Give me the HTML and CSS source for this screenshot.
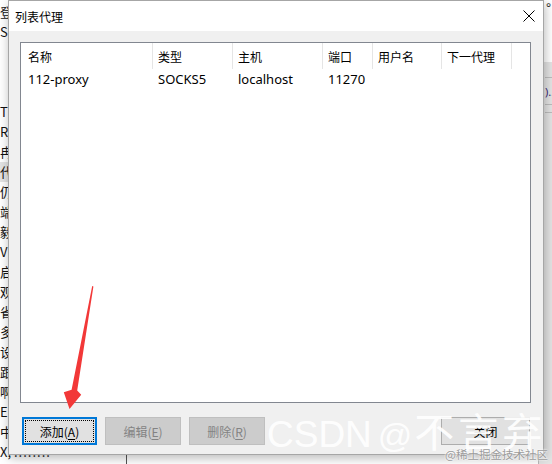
FILE: index.html
```html
<!DOCTYPE html>
<html lang="zh-CN">
<head>
<meta charset="utf-8">
<title>列表代理</title>
<link rel="stylesheet" href="styles.css">
</head>
<body>
<div class="desktop">
  <div class="bgwin">
    <div class="bgtext">
      <div>登</div><div>S</div><div>&nbsp;</div><div>&nbsp;</div><div>&nbsp;</div>
      <div>T</div><div>R</div><div>冉</div><div class="hl">代</div><div>仍</div>
      <div>端</div><div>毅</div><div>V</div><div>启</div><div>观</div>
      <div>省</div><div>多</div><div>设</div><div>跟</div><div>啊</div>
      <div>E</div><div>中</div><div>X, <span class="dots">........</span></div>
    </div>
    <div class="bgline"></div>
  </div>

  <div class="rightwin">
    <div class="rw-top">°</div>
    <div class="rw-gray">
      <div class="rw-cell"></div>
      <div class="rw-cell rw-text">)...</div>
      <div class="rw-cell small"></div>
    </div>
  </div>

  <div class="dialog">
    <div class="titlebar">
      <span class="title">列表代理</span>
      <span class="close">
        <svg width="12" height="12" viewBox="0 0 12 12"><path d="M0.5 0.5 L11.5 11.5 M11.5 0.5 L0.5 11.5" stroke="#000" stroke-width="1" fill="none"/></svg>
      </span>
    </div>
    <div class="body">
      <div class="list">
        <div class="head">
          <div class="c w1 first">名称</div>
          <div class="c w2">类型</div>
          <div class="c w3">主机</div>
          <div class="c w4">端口</div>
          <div class="c w5">用户名</div>
          <div class="c w6">下一代理</div>
        </div>
        <div class="row">
          <div class="d w1 first">112-proxy</div>
          <div class="d w2">SOCKS5</div>
          <div class="d w3">localhost</div>
          <div class="d w4">11270</div>
          <div class="d w5"></div>
          <div class="d w6"></div>
        </div>
      </div>
      <div class="buttons">
        <button class="btn default"><span class="focus">添加(<u>A</u>)</span></button>
        <button class="btn dis" disabled>编辑(<u>E</u>)</button>
        <button class="btn dis" disabled>删除(<u>R</u>)</button>
        <span class="spacer"></span>
        <button class="btn closebtn">关闭</button>
      </div>
    </div>
  </div>

  <svg class="arrow" width="552" height="464" viewBox="0 0 552 464">
    <polygon points="92.2,286 93.4,286.6 77.2,390.5 81.2,394.8 69.5,409 63.8,392.2 71.6,389.8" fill="#f23838"/>
  </svg>

  <div class="wm"><span class="wm-l">CSDN</span><span class="wm-at">@</span><span class="wm-c">不言弃</span></div>
  <div class="wm2">@稀土掘金技术社区</div>
</div>
</body>
</html>
```

FILE: styles.css
```css
* { box-sizing: border-box; }
html, body { margin: 0; padding: 0; }
body {
  width: 552px;
  height: 464px;
  overflow: hidden;
  background: #ffffff;
  font-family: "Noto Sans", "Noto Sans CJK SC", sans-serif;
  color: #000;
}
.desktop {
  position: relative;
  width: 552px;
  height: 464px;
  overflow: hidden;
  background: #ffffff;
}

/* window behind (left) */
.bgwin {
  position: absolute;
  left: 0;
  top: 0;
  width: 140px;
  height: 464px;
  background: #ffffff;
}
.bgtext {
  padding-top: 2px;
  padding-left: 0;
  font-family: "Noto Sans CJK SC", sans-serif;
  font-size: 13px;
  line-height: 20px;
  color: #111;
}
.bgtext .hl { background: #e3e3e3; width: 10px; }
.bgtext .dots { letter-spacing: 1px; }
.bgline {
  position: absolute;
  left: 126px;
  top: 440px;
  width: 1px;
  height: 24px;
  background: #555;
}

/* window behind (right) */
.rightwin {
  position: absolute;
  left: 538px;
  top: 0;
  width: 14px;
  height: 464px;
  background: #ffffff;
  display: flex;
  flex-direction: column;
}
.rw-top {
  height: 62px;
  padding-left: 8px;
  font-size: 12px;
  line-height: 16px;
  color: #333;
}
.rw-gray {
  flex: 1;
  background: #e4e4e4;
  border-left: 1px solid #b9b9b9;
  padding-left: 6px;
}
.rw-cell { height: 16px; border-bottom: 1px solid #bdbdbd; }
.rw-text {
  height: 27px;
  font-size: 11px;
  line-height: 27px;
  color: #3a2a7a;
  white-space: nowrap;
  overflow: hidden;
}
.rw-cell.small { height: 8px; }

/* dialog */
.dialog {
  position: absolute;
  left: 8px;
  top: 0;
  width: 536px;
  height: 455px;
  background: #f0f0f0;
  border: 1px solid #a6a6a6;
  box-shadow: 1px 3px 10px rgba(0, 0, 0, 0.28);
  display: flex;
  flex-direction: column;
}
.titlebar {
  height: 30px;
  flex: none;
  background: #ffffff;
  display: flex;
  align-items: center;
  justify-content: space-between;
  padding-left: 6px;
  font-family: "Noto Sans CJK SC", sans-serif;
  font-size: 12px;
}
.close {
  width: 28px;
  height: 30px;
  display: flex;
  align-items: center;
  justify-content: center;
}
.body {
  flex: 1;
  padding: 11px 11px 0 11px;
  display: flex;
  flex-direction: column;
}
.list {
  width: 511px;
  height: 361px;
  flex: none;
  background: #ffffff;
  border: 1px solid #828790;
}
.head {
  display: flex;
  height: 26px;
}
.c {
  display: flex;
  align-items: center;
  padding-left: 5px;
  border-right: 1px solid #e5e5e5;
  font-family: "Noto Sans CJK SC", sans-serif;
  font-size: 12px;
  white-space: nowrap;
}
.row {
  display: flex;
  height: 19px;
}
.d {
  display: flex;
  align-items: center;
  padding-left: 5px;
  font-family: "Noto Sans", sans-serif;
  font-size: 13px;
  white-space: nowrap;
}
.first { padding-left: 7px; }
.w1 { width: 132px; }
.w2 { width: 80px; }
.w3 { width: 90px; }
.w4 { width: 50px; }
.w5 { width: 69px; }
.w6 { width: 70px; }

.buttons {
  display: flex;
  margin-top: 14px;
  padding: 0 2px;
  gap: 8px;
}
.spacer { flex: 1; }
.btn {
  width: 76px;
  height: 28px;
  margin: 0;
  padding: 0;
  background: #e1e1e1;
  border: 1px solid #adadad;
  border-radius: 0;
  font-family: "Noto Sans CJK SC", sans-serif;
  font-size: 12px;
  color: #000;
  display: flex;
  align-items: center;
  justify-content: center;
}
.btn u { text-underline-offset: 2px; }
.btn.default {
  width: 75px;
  border: 2px solid #0078d7;
  padding: 1px;
}
.focus {
  width: 100%;
  height: 100%;
  border: 1px dotted #000;
  display: flex;
  align-items: center;
  justify-content: center;
}
.btn.dis {
  background: #cccccc;
  border-color: #bfbfbf;
  color: #838383;
}
.btn.closebtn { width: 89px; }

/* annotation overlays */
.arrow {
  position: absolute;
  left: 0;
  top: 0;
  pointer-events: none;
}
.wm {
  position: absolute;
  left: 267px;
  top: 410px;
  display: flex;
  align-items: baseline;
  color: rgba(255, 255, 255, 0.93);
  white-space: nowrap;
  line-height: 40px;
}
.wm-l {
  font-family: "Liberation Sans", sans-serif;
  font-size: 37px;
}
.wm-at {
  font-family: "Liberation Sans", sans-serif;
  font-size: 34px;
  margin-left: 6px;
}
.wm-c {
  font-family: "Noto Sans CJK SC", sans-serif;
  font-size: 40px;
  letter-spacing: 4px;
  margin-left: 2px;
}
.wm2 {
  position: absolute;
  left: 445px;
  top: 446px;
  font-family: "Noto Sans CJK SC", sans-serif;
  font-size: 11.5px;
  line-height: 16px;
  color: #9a9a9a;
  text-shadow: 0 0 2px #fff, 0 0 2px #fff;
  white-space: nowrap;
}
```
